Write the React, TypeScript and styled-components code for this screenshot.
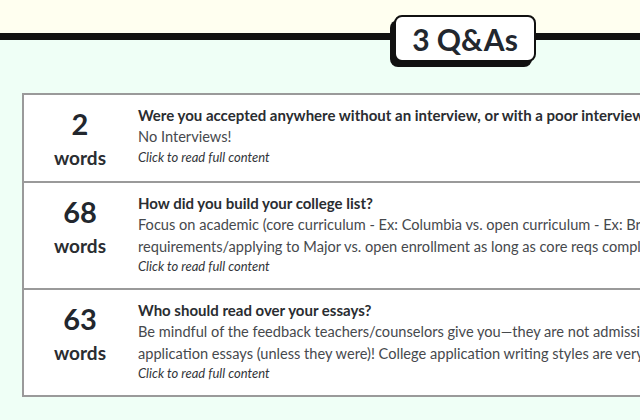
import styled, { createGlobalStyle } from "styled-components";

const GlobalStyle = createGlobalStyle`
    html, body {
        margin: 0;
        padding: 0;
        background: #effff6;
        overflow: hidden;
    }
    body {
        font-family: Lato, "Noto Sans", sans-serif;
        color: #2a2d31;
    }
`;

const Page = styled.div`
    width: 640px;
    height: 420px;
    position: relative;
    overflow: hidden;
`;

const Header = styled.div`
    height: 33px;
    background: #fffff0;
    border-bottom: 7px solid #111;
`;

const Badge = styled.div`
    position: absolute;
    left: 394px;
    top: 15px;
    width: 142px;
    height: 47px;
    box-sizing: border-box;
    background: #fff;
    border: 2px solid #111;
    border-radius: 8px;
    box-shadow: -4px 5px 0 #111;
    display: flex;
    align-items: center;
    justify-content: center;
    font-size: 30px;
    font-weight: 700;
    color: #22272e;
`;

const Table = styled.div`
    margin: 53px 0 0 22px;
    width: 900px;
    background: #fff;
    border: 2px solid #9a9a9a;
`;

const Row = styled.div`
    display: flex;
    border-top: 2px solid #9a9a9a;
    &:first-child {
        border-top: none;
    }
`;

const Count = styled.div`
    width: 112px;
    flex-shrink: 0;
    text-align: center;
    padding: 10px 0 8px;
`;

const Number = styled.div`
    font-size: 29px;
    line-height: 38px;
    font-weight: 700;
    color: #22272e;
`;

const Unit = styled.div`
    font-size: 19px;
    line-height: 30px;
    font-weight: 700;
    color: #2a2d31;
`;

const Content = styled.div`
    padding: 10px 0 13px 2px;
    white-space: nowrap;
`;

const Question = styled.div`
    font-size: 15px;
    line-height: 21px;
    font-weight: 700;
    color: #2a2d31;
`;

const Answer = styled.div`
    font-size: 14.6px;
    line-height: 21.5px;
    color: #46494d;
`;

const Hint = styled.div`
    font-size: 13px;
    line-height: 18px;
    font-style: italic;
    color: #33363a;
`;

interface IQA {
    words: number,
    question: string,
    answer: string[]
}

const qas: IQA[] = [
    {
        words: 2,
        question: "Were you accepted anywhere without an interview, or with a poor interview?",
        answer: ["No Interviews!"]
    },
    {
        words: 68,
        question: "How did you build your college list?",
        answer: [
            "Focus on academic (core curriculum - Ex: Columbia vs. open curriculum - Ex: Brown), general education",
            "requirements/applying to Major vs. open enrollment as long as core reqs completed, and class sizes."
        ]
    },
    {
        words: 63,
        question: "Who should read over your essays?",
        answer: [
            "Be mindful of the feedback teachers/counselors give you\u2014they are not admissions officers and don't write",
            "application essays (unless they were)! College application writing styles are very different from school essays."
        ]
    }
];

function App() {
    return (
        <>
            <GlobalStyle />
            <Page>
                <Header />
                <Badge>3 Q&amp;As</Badge>
                <Table>
                    {
                        qas.map((qa, i) => (
                            <Row key={i}>
                                <Count>
                                    <Number>{qa.words}</Number>
                                    <Unit>words</Unit>
                                </Count>
                                <Content>
                                    <Question>{qa.question}</Question>
                                    {qa.answer.map((line, j) => <Answer key={j}>{line}</Answer>)}
                                    <Hint>Click to read full content</Hint>
                                </Content>
                            </Row>
                        ))
                    }
                </Table>
            </Page>
        </>
    )
}

export default App;
